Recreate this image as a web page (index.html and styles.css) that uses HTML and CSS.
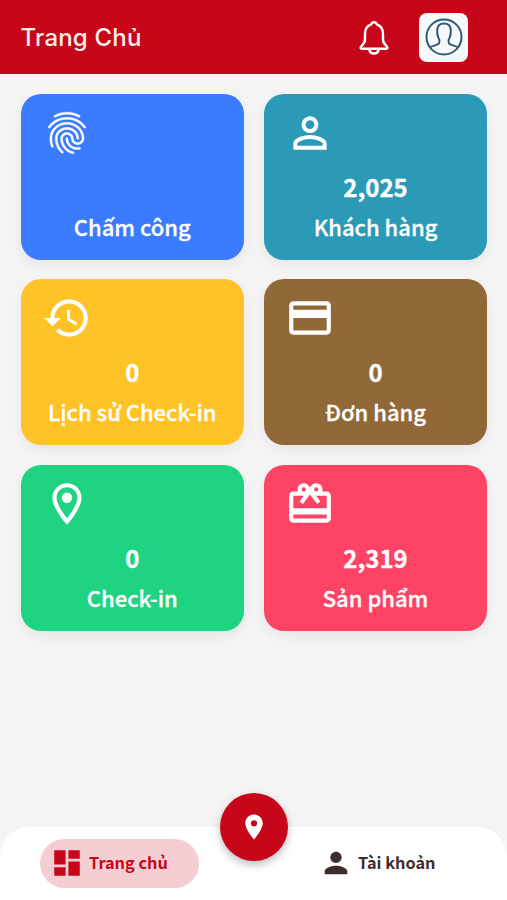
FILE: index.html
```html
<!DOCTYPE html>
<html lang="vi">
<head>
<meta charset="utf-8">
<meta name="viewport" content="width=device-width, initial-scale=1">
<title>Trang Chủ</title>
<link rel="stylesheet" href="styles.css">
</head>
<body>
<div class="app">
  <header class="topbar">
    <h1 class="title">Trang Chủ</h1>
    <svg class="bell" viewBox="0 0 34 36" fill="none" stroke="currentColor" stroke-width="2.4" stroke-linejoin="round" stroke-linecap="round">
      <path d="M17 2.200c-1.500 0-2.400.9-2.800 2.200C10 5.800 8 9.600 8 14v5.500c0 2.700-1 4.400-3.300 6.300-1.600 1.400-1.600 3 .4 3h23.800c2 0 2-1.600.4-3-2.300-1.900-3.300-3.600-3.300-6.300V14c0-4.400-2-8.200-6.200-9.600-.4-1.300-1.300-2.200-2.800-2.200z"/>
      <path d="M12.300 29.500c.4 2.500 2.200 4 4.700 4s4.300-1.500 4.700-4"/>
    </svg>
    <div class="avatar">
      <svg viewBox="0 0 38 38" fill="none" stroke="currentColor" stroke-width="2">
        <circle cx="19" cy="19" r="17.500"/>
        <path d="M4.800 29.400c2.600-1.500 5.900-1.900 8.200-3.200 1.900-1.100 1.700-4.200.6-6-1.200-2.300-1.600-5-1.400-8.200C12.500 7.800 15 5.600 19 5.600s6.500 2.200 6.800 6.400c.2 3.200-.2 5.900-1.400 8.200-1.100 1.800-1.300 4.900.6 6 2.300 1.300 5.600 1.700 8.200 3.200"/>
      </svg>
    </div>
  </header>

  <main class="grid">
    <section class="card blue">
      <svg class="icon finger" viewBox="0 0 24 24"><path d="M17.810 4.470c-.08 0-.16-.02-.23-.06C15.660 3.420 14 3 12.010 3c-1.980 0-3.860.47-5.570 1.410-.24.13-.54.04-.68-.2-.13-.24-.04-.55.2-.68C7.820 2.520 9.860 2 12.010 2c2.130 0 3.990.47 6.030 1.520.25.13.34.43.21.67-.09.18-.26.28-.44.28zM3.500 9.720c-.1 0-.2-.03-.29-.09-.23-.16-.28-.47-.12-.7.99-1.400 2.250-2.500 3.750-3.270C9.980 4.040 14 4.030 17.150 5.650c1.500.77 2.760 1.860 3.750 3.250.16.22.11.54-.12.7-.23.16-.54.11-.7-.12-.9-1.260-2.040-2.250-3.390-2.940-2.870-1.470-6.540-1.470-9.400.01-1.360.7-2.500 1.700-3.400 2.960-.08.14-.23.21-.39.21zm6.250 12.070c-.13 0-.26-.05-.35-.15-.87-.87-1.340-1.430-2.010-2.640-.69-1.230-1.050-2.730-1.050-4.340 0-2.970 2.540-5.390 5.660-5.390s5.660 2.420 5.660 5.390c0 .28-.22.5-.5.5s-.5-.22-.5-.5c0-2.420-2.090-4.390-4.660-4.390-2.570 0-4.660 1.970-4.660 4.390 0 1.440.32 2.770.93 3.850.64 1.150 1.080 1.640 1.850 2.420.19.2.19.51 0 .71-.11.1-.24.15-.37.15zm7.170-1.850c-1.190 0-2.240-.3-3.100-.89-1.490-1.010-2.380-2.650-2.380-4.390 0-.28.22-.5.5-.5s.5.22.5.5c0 1.410.72 2.740 1.940 3.560.71.48 1.540.71 2.540.71.24 0 .64-.03 1.040-.1.27-.05.53.13.58.41.05.27-.13.53-.41.58-.57.11-1.070.12-1.210.12zM14.910 22c-.04 0-.09-.01-.13-.02-1.590-.44-2.630-1.030-3.720-2.100-1.400-1.390-2.170-3.240-2.170-5.220 0-1.620 1.380-2.940 3.080-2.940 1.700 0 3.080 1.320 3.080 2.940 0 1.070.93 1.940 2.080 1.940s2.080-.87 2.080-1.940c0-3.770-3.250-6.830-7.250-6.830-2.840 0-5.440 1.580-6.610 4.030-.39.81-.59 1.760-.59 2.800 0 .78.07 2.010.67 3.610.1.26-.03.55-.29.64-.26.1-.55-.04-.64-.29-.49-1.310-.73-2.610-.73-3.960 0-1.200.23-2.290.68-3.240 1.330-2.790 4.280-4.600 7.510-4.600 4.550 0 8.250 3.510 8.250 7.830 0 1.620-1.380 2.940-3.080 2.940s-3.080-1.320-3.080-2.940c0-1.070-.93-1.940-2.080-1.940s-2.080.87-2.080 1.940c0 1.710.66 3.310 1.870 4.510.95.94 1.860 1.460 3.270 1.850.27.07.42.35.35.61-.05.23-.26.38-.47.38z"/></svg>
      <p class="label">Chấm công</p>
    </section>
    <section class="card teal">
      <svg class="icon" viewBox="0 0 24 24"><path d="M12 5.900a2.100 2.100 0 1 1 0 4.200 2.100 2.100 0 0 1 0-4.200m0 9c2.970 0 6.100 1.460 6.100 2.100v1.100H5.900V17c0-.64 3.130-2.100 6.100-2.100M12 4C9.790 4 8 5.790 8 8s1.790 4 4 4 4-1.790 4-4-1.790-4-4-4zm0 9c-2.670 0-8 1.340-8 4v3h16v-3c0-2.660-5.330-4-8-4z"/></svg>
      <p class="value">2,025</p>
      <p class="label">Khách hàng</p>
    </section>
    <section class="card yellow">
      <svg class="icon" viewBox="0 0 24 24"><path d="M13 3c-4.970 0-9 4.030-9 9H1l3.890 3.890.07.14L9 12H6c0-3.870 3.130-7 7-7s7 3.130 7 7-3.130 7-7 7c-1.930 0-3.680-.79-4.940-2.060l-1.420 1.420C8.270 19.990 10.510 21 13 21c4.970 0 9-4.030 9-9s-4.030-9-9-9zm-1 5v5l4.280 2.540.72-1.210-3.500-2.080V8H12z"/></svg>
      <p class="value">0</p>
      <p class="label">Lịch sử Check-in</p>
    </section>
    <section class="card brown">
      <svg class="icon" viewBox="0 0 24 24"><path d="M20 4H4c-1.110 0-1.990.89-1.990 2L2 18c0 1.110.89 2 2 2h16c1.110 0 2-.89 2-2V6c0-1.110-.89-2-2-2zm0 14H4v-6h16v6zm0-10H4V6h16v2z"/></svg>
      <p class="value">0</p>
      <p class="label">Đơn hàng</p>
    </section>
    <section class="card green">
      <svg class="icon" viewBox="0 0 24 24"><path d="M12 2C8.130 2 5 5.130 5 9c0 5.250 7 13 7 13s7-7.750 7-13c0-3.870-3.130-7-7-7zM7 9c0-2.760 2.240-5 5-5s5 2.240 5 5c0 2.880-2.880 7.190-5 9.880C9.920 16.210 7 11.850 7 9z"/><circle cx="12" cy="9" r="2.500"/></svg>
      <p class="value">0</p>
      <p class="label">Check-in</p>
    </section>
    <section class="card pink">
      <svg class="icon" viewBox="0 0 24 24"><path d="M20 6h-2.180c.11-.31.18-.65.18-1 0-1.660-1.340-3-3-3-1.050 0-1.960.54-2.500 1.350l-.5.67-.5-.68C10.960 2.540 10.050 2 9 2 7.340 2 6 3.340 6 5c0 .35.07.69.18 1H4c-1.110 0-1.990.89-1.990 2L2 19c0 1.110.89 2 2 2h16c1.110 0 2-.89 2-2V8c0-1.110-.89-2-2-2zm-5-2c.55 0 1 .45 1 1s-.45 1-1 1-1-.45-1-1 .45-1 1-1zM9 4c.55 0 1 .45 1 1s-.45 1-1 1-1-.45-1-1 .45-1 1-1zm11 15H4v-2h16v2zm0-5H4V8h5.080L7 10.830 8.620 12 11 8.760l1-1.360 1 1.360L15.380 12 17 10.830 14.920 8H20v6z"/></svg>
      <p class="value">2,319</p>
      <p class="label">Sản phẩm</p>
    </section>
  </main>

  <nav class="tabs">
    <a class="tab active">
      <svg class="tab-icon" viewBox="0 0 24 24"><path d="M3 13h8V3H3v10zm0 8h8v-6H3v6zm10 0h8V11h-8v10zm0-18v6h8V3h-8z"/></svg>
      <span>Trang chủ</span>
    </a>
    <a class="tab">
      <svg class="tab-icon" viewBox="0 0 24 24"><path d="M12 12c2.210 0 4-1.790 4-4s-1.790-4-4-4-4 1.790-4 4 1.790 4 4 4zm0 2c-2.670 0-8 1.340-8 4v2h16v-2c0-2.660-5.330-4-8-4z"/></svg>
      <span>Tài khoản</span>
    </a>
    <div class="fab">
      <svg viewBox="0 0 24 24"><path d="M12 2C8.130 2 5 5.130 5 9c0 5.250 7 13 7 13s7-7.750 7-13c0-3.870-3.130-7-7-7zm0 9.500a2.500 2.500 0 0 1 0-5 2.500 2.500 0 0 1 0 5z"/></svg>
    </div>
  </nav>
</div>
</body>
</html>
```

FILE: styles.css
```css
* { box-sizing: border-box; }

body {
  margin: 0;
  background: #f4f4f4;
  font-family: "Noto Sans CJK SC", "Noto Sans", sans-serif;
}

.app {
  display: flex;
  flex-direction: column;
  height: 900px;
  overflow: hidden;
}

.topbar {
  display: flex;
  align-items: center;
  height: 74px;
  padding: 0 39px 0 20.500px;
  background: #c70619;
  color: #fff;
}

.title {
  flex: 1;
  margin: 0;
  padding-top: 2px;
  font: 500 24px/30px Inter, Roboto, sans-serif;
  letter-spacing: .2px;
  color: #fdeeee;
}

.bell {
  width: 34px;
  height: 36px;
  margin: 2px 28px 0 0;
}

.avatar {
  display: flex;
  align-items: center;
  justify-content: center;
  width: 49px;
  height: 49px;
  border-radius: 8px;
  background: #f6f8f9;
  color: #2c5a78;
}

.avatar svg {
  width: 38px;
  height: 38px;
}

.grid {
  flex: 1;
  display: grid;
  grid-template-columns: 1fr 1fr;
  grid-auto-rows: 166px;
  gap: 19.700px;
  padding: 19.800px 19.700px 0 20.500px;
}

.card {
  display: flex;
  flex-direction: column;
  padding: 14px 21.500px 16.300px;
  border-radius: 20px;
  color: #fff;
  text-align: center;
  box-shadow: 0 5px 12px rgba(0, 0, 0, .06);
}

.blue { background: #3a7bff; }
.teal { background: #2b9ab7; }
.yellow { background: #ffc328; }
.brown { background: #916837; }
.green { background: #1ed381; }
.pink { background: #ff4365; }

.icon {
  width: 50px;
  height: 50px;
  fill: currentColor;
}

.finger {
  stroke: currentColor;
  stroke-width: .2;
}

.value {
  margin: 10px 0 0;
  font-size: 24px;
  font-weight: 700;
  line-height: 38px;
  -webkit-text-stroke: .3px currentColor;
}

.label {
  margin: auto 0 0;
  font-size: 22px;
  font-weight: 500;
  line-height: 36px;
  white-space: nowrap;
  -webkit-text-stroke: .3px currentColor;
}

.tabs {
  position: relative;
  display: grid;
  grid-template-columns: 159px 159px;
  justify-content: space-between;
  height: 73px;
  padding: 12px 40px;
  border-radius: 30px 30px 0 0;
  background: #fff;
}

.tab {
  display: flex;
  align-items: center;
  gap: 5px;
  height: 49px;
  padding-left: 10px;
  border-radius: 25px;
  color: #402d2b;
  font-size: 16.300px;
  font-weight: 700;
  white-space: nowrap;
}

.tab:not(.active) {
  padding-left: 11px;
}

.tab span {
  padding-bottom: 3px;
}

.active {
  background: #f5ced4;
  color: #c70619;
}

.tab-icon {
  width: 34px;
  height: 34px;
  margin-bottom: 1px;
  fill: currentColor;
}

.fab {
  position: absolute;
  top: -34px;
  left: 220px;
  display: flex;
  align-items: center;
  justify-content: center;
  width: 68px;
  height: 68px;
  border-radius: 50%;
  background: #c70619;
  box-shadow: 0 4px 8px rgba(0, 0, 0, .25);
}

.fab svg {
  width: 30px;
  height: 30px;
  fill: #fff;
}
```
